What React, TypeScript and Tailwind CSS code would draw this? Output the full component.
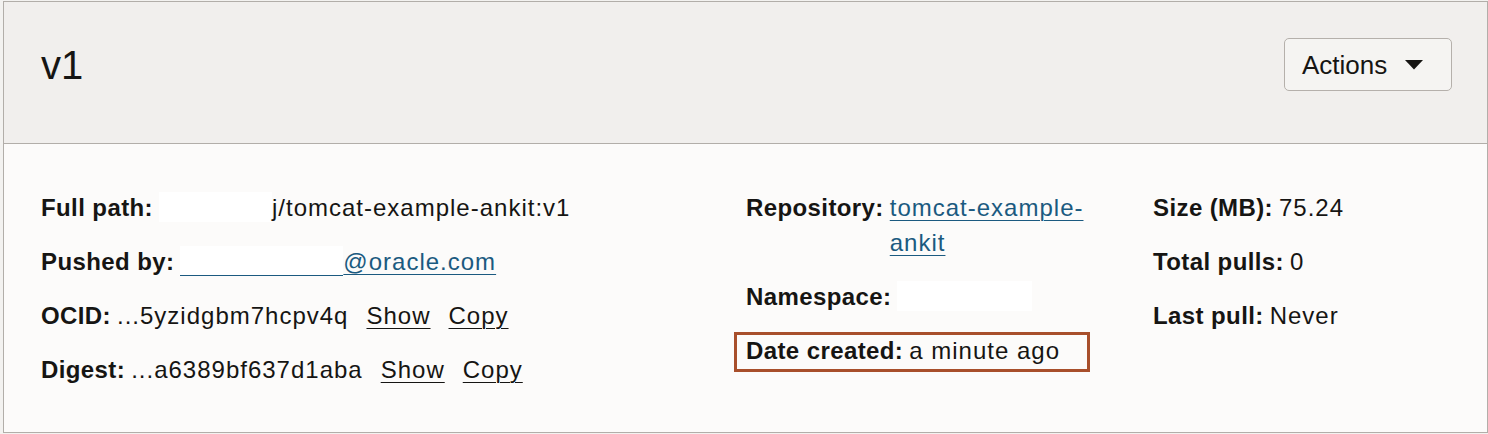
import type { ReactNode } from 'react';

const labelCls = 'font-bold tracking-[0.4px] text-[#161513] whitespace-nowrap';

function Field({ label, children }: { label: string; children: ReactNode }) {
  return (
    <div className="flex items-start leading-[35px]">
      <span className={labelCls}>{label}</span>
      <span className="ml-[6px] min-w-0 tracking-[1px]">{children}</span>
    </div>
  );
}

function Redacted({ width }: { width: string }) {
  return <span className={`inline-block bg-white align-top h-[30px] mt-[2px] ${width}`} />;
}

function TextLink({ children }: { children: ReactNode }) {
  return <span className="underline underline-offset-[4px] decoration-1 text-[#161513]">{children}</span>;
}

function CaretDown() {
  return (
    <svg width="18" height="10" viewBox="0 0 18 10" className="ml-[18px]">
      <path d="M0 0h18L9 9.5z" fill="#161513" />
    </svg>
  );
}

export default function App() {
  return (
    <div className="min-h-screen bg-[#f3f2f0] pl-[3px] pt-[1px] font-['Liberation_Sans',Arial,sans-serif] text-[24px] text-[#161513]">
      <div className="w-[1485px] h-[432px] border border-[#b2aea9] flex flex-col">
        {/* header */}
        <div className="h-[142px] shrink-0 bg-[#f1efed] border-b border-[#b2aea9] flex items-start justify-between pl-[37px] pr-[35px] pt-[36px]">
          <h1 className="text-[40px] leading-[53px] mt-[1px] font-normal">v1</h1>
          <button className="h-[53px] w-[168px] flex items-center pl-[17px] rounded-[5px] border border-[#b5b0ab] bg-[#f5f4f2] text-[26px] leading-none">
            Actions
            <CaretDown />
          </button>
        </div>

        {/* details */}
        <div className="flex-1 bg-[#fcfbfa] flex pl-[37px] pt-[46px]">
          <div className="w-[705px] flex flex-col gap-[19px]">
            <Field label="Full path:">
              <Redacted width="w-[113px]" />
              <span>j/tomcat-example-ankit:v1</span>
            </Field>
            <Field label="Pushed by:">
              <a href="#" className="text-[#1b5a80] underline underline-offset-[4px] decoration-1">
                <Redacted width="w-[163px] border-b border-[#1b5a80]" />
                @oracle.com
              </a>
            </Field>
            <Field label="OCID:">
              <span className="flex gap-[18px]">
                <span>...5yzidgbm7hcpv4q</span>
                <TextLink>Show</TextLink>
                <TextLink>Copy</TextLink>
              </span>
            </Field>
            <Field label="Digest:">
              <span className="flex gap-[18px]">
                <span>...a6389bf637d1aba</span>
                <TextLink>Show</TextLink>
                <TextLink>Copy</TextLink>
              </span>
            </Field>
          </div>

          <div className="w-[407px] pr-[40px] flex flex-col gap-[19px]">
            <Field label="Repository:">
              <a href="#" className="text-[#1b5a80] underline underline-offset-[4px] decoration-1 break-words">
                tomcat-example-ankit
              </a>
            </Field>
            <Field label="Namespace:">
              <Redacted width="w-[135px]" />
            </Field>
            <div className="relative">
              <Field label="Date created:">a minute ago</Field>
              {/* highlight annotation */}
              <div className="absolute left-[-12px] top-[-1px] w-[356px] h-[40px] border-[3px] border-[#a84f2b] pointer-events-none" />
            </div>
          </div>

          <div className="flex-1 flex flex-col gap-[19px]">
            <Field label="Size (MB):">75.24</Field>
            <Field label="Total pulls:">0</Field>
            <Field label="Last pull:">Never</Field>
          </div>
        </div>
      </div>
    </div>
  );
}
